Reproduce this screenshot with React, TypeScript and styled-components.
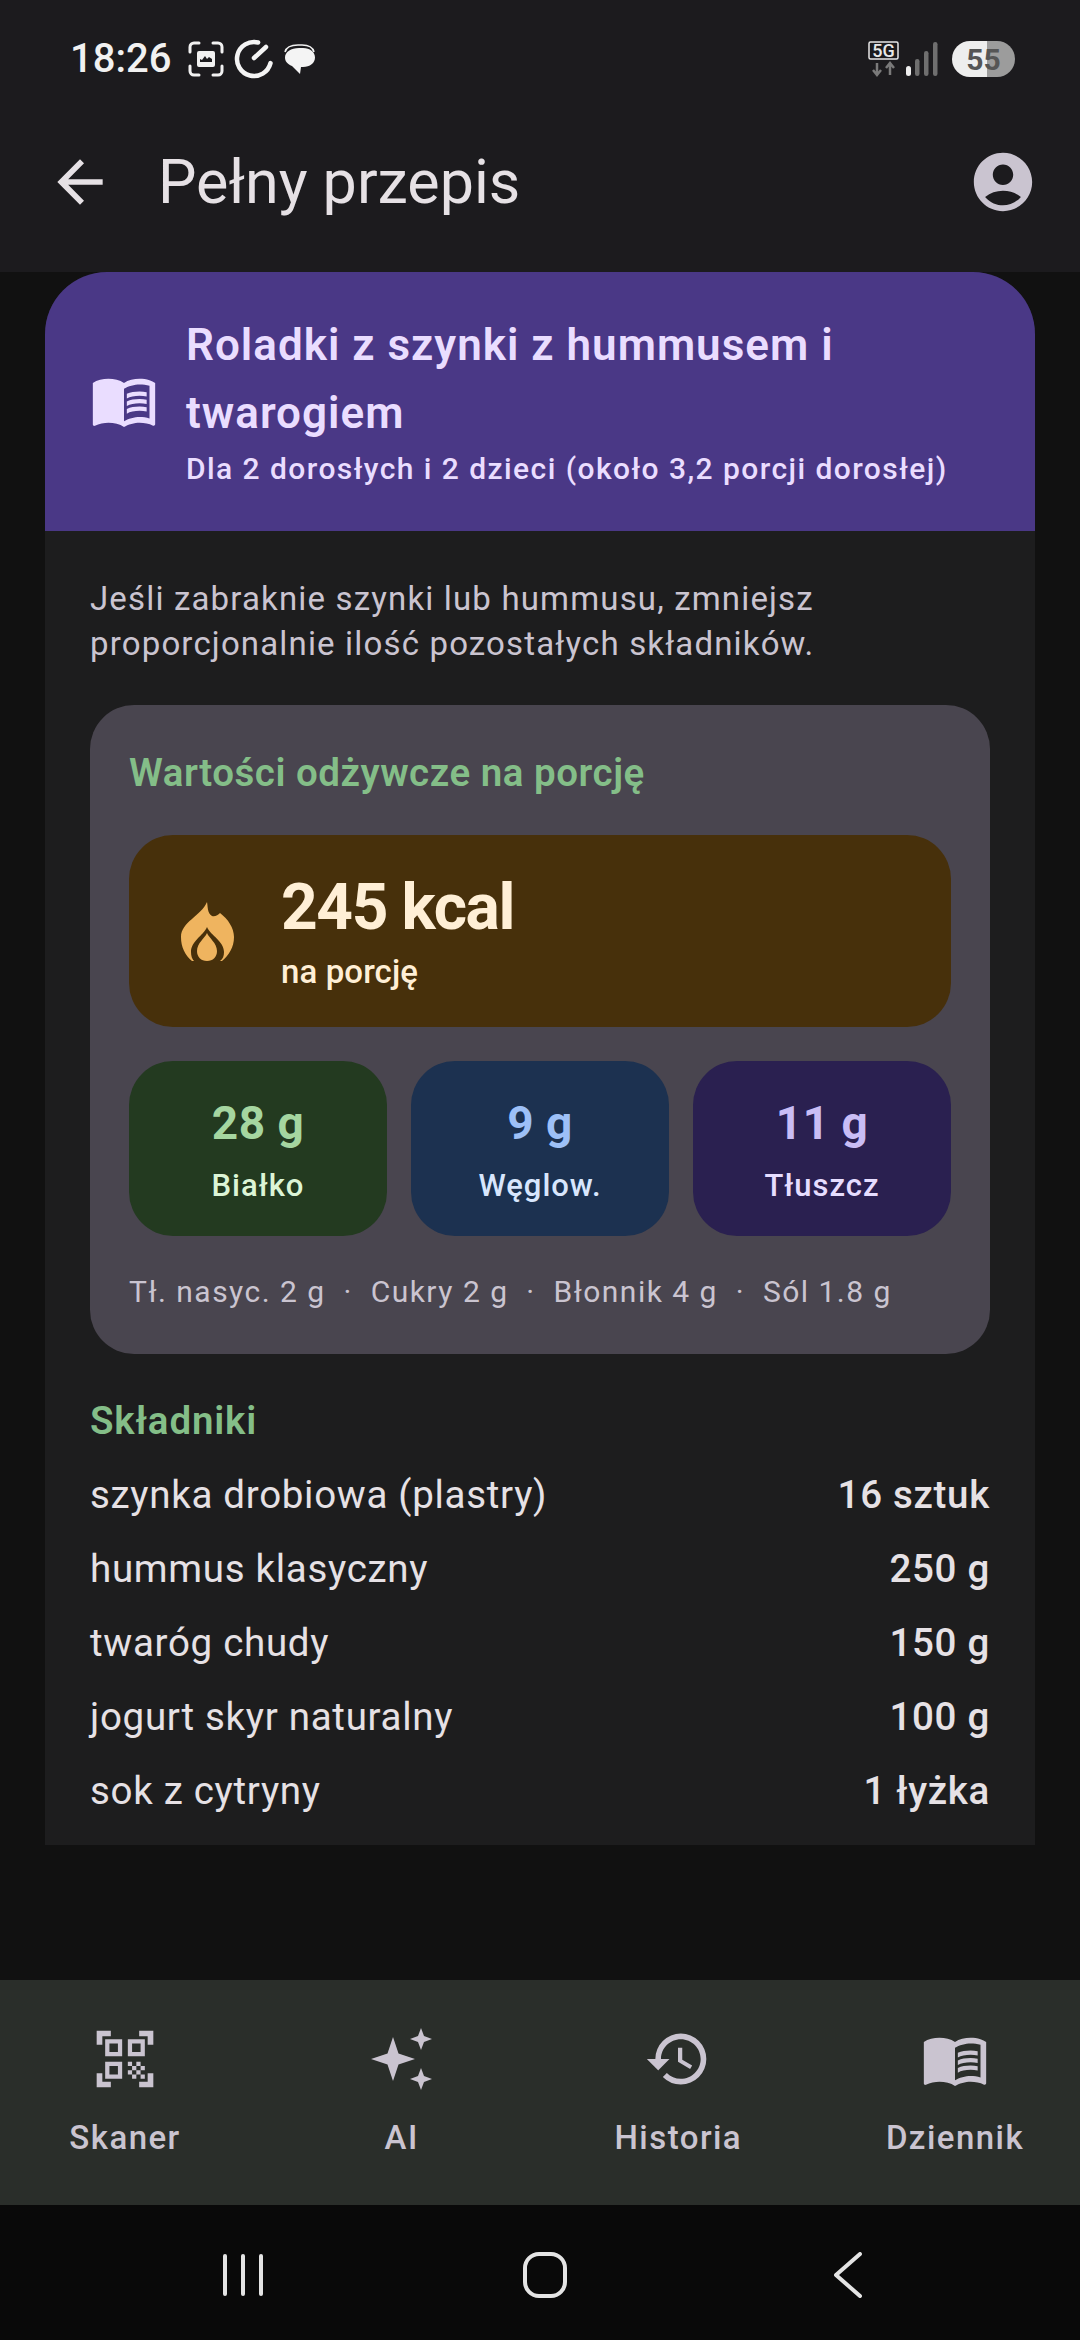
import { createGlobalStyle, styled } from "styled-components";
import { MdAccountCircle, MdArrowBack, MdHistory, MdMenuBook, MdQrCodeScanner } from "react-icons/md";

const GlobalStyle = createGlobalStyle`
  html, body {
    margin: 0;
    background: #111111;
  }
  body {
    font-family: Roboto, "Noto Sans", sans-serif;
  }
  * {
    box-sizing: border-box;
  }
`;

const Screen = styled.div`
  display: flex;
  flex-direction: column;
  width: 1080px;
  height: 2340px;
  overflow: hidden;
  background: #111111;
`;

const StatusBar = styled.div`
  display: flex;
  align-items: center;
  justify-content: space-between;
  height: 92px;
  padding: 26px 65px 0 70px;
  background: #1c1b1e;
`;

const StatusGroup = styled.div`
  display: flex;
  align-items: center;
  gap: ${(props: { $gap: number }) => props.$gap}px;
`;

const Clock = styled.span`
  margin-right: 7px;
  font-size: 40px;
  line-height: 46px;
  font-weight: 500;
  color: #f1f1f1;
`;

const Battery = styled.div`
  display: flex;
  align-items: center;
  justify-content: center;
  width: 63px;
  height: 36px;
  margin-left: 8px;
  border-radius: 18px;
  background: linear-gradient(90deg, #eeeeee 0 55%, #9c9c9c 55% 100%);
  font-size: 30px;
  font-weight: 700;
  color: #555555;
`;

const AppBar = styled.header`
  display: flex;
  align-items: center;
  height: 180px;
  padding: 0 42px 0 46px;
  background: #1c1b1e;
  color: #e6e1e5;
`;

const AppTitle = styled.h1`
  flex: 1;
  margin: 0 0 0 44px;
  font-size: 61px;
  line-height: 80px;
  font-weight: 400;
`;

const Main = styled.main`
  flex: 1;
  padding: 0 45px;
`;

const RecipeCard = styled.article`
  border-radius: 62px 62px 0 0;
  overflow: hidden;
  background: #1d1d1e;
`;

const RecipeHeader = styled.div`
  display: flex;
  align-items: center;
  gap: 28px;
  height: 259px;
  padding: 0 30px 3px 45px;
  background: #4a3886;
  color: #eaddff;
`;

const RecipeTitle = styled.h2`
  margin: 0;
  font-size: 44px;
  line-height: 68px;
  font-weight: 600;
  letter-spacing: 1px;
`;

const RecipeSubtitle = styled.p`
  margin: 2px 0 0;
  font-size: 30px;
  line-height: 40px;
  font-weight: 500;
  letter-spacing: 1.43px;
`;

const RecipeBody = styled.div`
  padding: 45px 45px 28px;
`;

const Note = styled.p`
  margin: 0;
  font-size: 33px;
  line-height: 45px;
  letter-spacing: 1.16px;
  color: #cac4d0;
`;

const NutritionCard = styled.section`
  margin-top: 39px;
  padding: 42px 39px;
  border-radius: 44px;
  background: #49454f;
`;

const SectionTitle = styled.h3`
  margin: 0;
  font-size: 38.5px;
  line-height: 52px;
  font-weight: 600;
  letter-spacing: 0.52px;
  color: #84be88;
`;

const KcalCard = styled.div`
  display: flex;
  align-items: center;
  gap: 47px;
  height: 192px;
  margin-top: 36px;
  padding: 0 52px;
  border-radius: 44px;
  background: #47300b;
`;

const KcalValue = styled.div`
  font-size: 64px;
  line-height: 78px;
  font-weight: 700;
  letter-spacing: -1.4px;
  color: #ffefd6;
`;

const KcalLabel = styled.div`
  margin-top: 3px;
  font-size: 33px;
  line-height: 44px;
  font-weight: 500;
  letter-spacing: 0.1px;
  color: #ffefd6;
`;

const MacroRow = styled.div`
  display: grid;
  grid-template-columns: repeat(3, 1fr);
  gap: 24px;
  margin-top: 34px;
`;

const MacroCard = styled.div<{ $bg: string }>`
  display: flex;
  flex-direction: column;
  align-items: center;
  justify-content: center;
  gap: 15px;
  height: 175px;
  padding-top: 3px;
  border-radius: 44px;
  background: ${(props) => props.$bg};
`;

const MacroValue = styled.div<{ $color: string }>`
  font-size: 46px;
  line-height: 56px;
  font-weight: 700;
  letter-spacing: 0.5px;
  color: ${(props) => props.$color};
`;

const MacroLabel = styled.div<{ $color: string }>`
  font-size: 31px;
  line-height: 40px;
  font-weight: 500;
  letter-spacing: 1px;
  color: ${(props) => props.$color};
`;

const Extras = styled.p`
  margin: 36px 0 0;
  font-size: 30px;
  line-height: 40px;
  font-weight: 400;
  letter-spacing: 1.48px;
  white-space: pre;
  color: #cac4d0;
`;

const IngredientsTitle = styled(SectionTitle)`
  margin-top: 41px;
  letter-spacing: 0.85px;
`;

const IngredientList = styled.ul`
  display: flex;
  flex-direction: column;
  gap: 22px;
  margin: 22px 0 0;
  padding: 0;
  list-style: none;
`;

const Ingredient = styled.li`
  display: flex;
  justify-content: space-between;
  font-size: 38.5px;
  line-height: 52px;
  letter-spacing: 0.7px;
  color: #e6e1e5;
`;

const Amount = styled.span`
  font-weight: 500;
`;

const BottomNav = styled.nav`
  display: flex;
  justify-content: space-between;
  height: 225px;
  padding: 46px 33px 0;
  background: #2a2e2a;
`;

const NavItem = styled.div`
  display: flex;
  flex-direction: column;
  align-items: center;
  gap: 24px;
  width: 184px;
  color: #cac4d0;
`;

const NavLabel = styled.span`
  font-size: 33px;
  line-height: 44px;
  font-weight: 500;
  letter-spacing: 1.45px;
`;

const NavIconBox = styled.div`
  display: flex;
  align-items: center;
  justify-content: center;
  width: 68px;
  height: 66px;
`;

const SystemBar = styled.div`
  display: flex;
  align-items: center;
  justify-content: space-between;
  height: 135px;
  padding: 5px 218px 0 223px;
  background: #090909;
`;

const HomeSlot = styled.div`
  display: flex;
  margin-right: 8px;
`;

function ScreenshotIcon() {
  return (
    <svg width="36" height="36" viewBox="0 0 36 36" fill="none">
      <path
        d="M2 11V6a4 4 0 0 1 4-4h5M25 2h5a4 4 0 0 1 4 4v5M34 25v5a4 4 0 0 1-4 4h-5M11 34H6a4 4 0 0 1-4-4v-5"
        stroke="#f1f1f1"
        strokeWidth="3"
        strokeLinecap="round"
      />
      <path
        fillRule="evenodd"
        clipRule="evenodd"
        d="M11 10h14a2 2 0 0 1 2 2v12a2 2 0 0 1-2 2H11a2 2 0 0 1-2-2V12a2 2 0 0 1 2-2Zm1 11h12v-3l-3-2-2 2-2-3-3 4-2-1Z"
        fill="#f1f1f1"
      />
    </svg>
  );
}

function TimerIcon() {
  return (
    <svg width="40" height="40" viewBox="0 0 40 40" fill="none">
      <path
        d="M20 3a17 17 0 1 0 17 17"
        stroke="#f4f4f4"
        strokeWidth="4.5"
        strokeLinecap="round"
        transform="rotate(14 20 20)"
      />
      <path d="M20 19 32 8" stroke="#f4f4f4" strokeWidth="4.5" strokeLinecap="round" />
    </svg>
  );
}

function ChatIcon() {
  return (
    <svg width="32" height="32" viewBox="0 0 32 32" fill="none">
      <path
        d="M1 9c1-4 5-7 13-7h4c7 0 11 3 12 7"
        stroke="#f1f1f1"
        strokeWidth="1.5"
        fill="none"
      />
      <path
        d="M15 5h4c7 0 12 4 12 9.500S26 24 19 24h-2l-1 7-8-8C3 21 1 18 1 14.500 1 9 7 5 15 5Z"
        fill="#f4f4f4"
      />
    </svg>
  );
}

function NetworkIcon() {
  return (
    <svg width="32" height="36" viewBox="0 0 32 36" fill="none">
      <rect x="1" y="1" width="29" height="17" rx="1.5" stroke="#e8e8e8" strokeWidth="1.500" />
      <text x="15.5" y="15.500" fontFamily="Roboto" fontSize="18" fontWeight="500" textAnchor="middle" fill="#e8e8e8">
        5G
      </text>
      <path
        d="M9 22v12M5 29l4 5 4-5M22 34V22M18 27l4-5 4 5"
        stroke="#7a7a7a"
        strokeWidth="2.500"
      />
    </svg>
  );
}

function SignalIcon() {
  return (
    <svg width="32" height="34" viewBox="0 0 32 34">
      <rect x="0" y="24" width="5" height="10" rx="2.500" fill="#eeeeee" />
      <rect x="9" y="17" width="4.500" height="17" rx="2.200" fill="#6f6f6f" />
      <rect x="18" y="9" width="4.500" height="25" rx="2.200" fill="#6f6f6f" />
      <rect x="27" y="0" width="4.500" height="34" rx="2.200" fill="#6f6f6f" />
    </svg>
  );
}

function FlameIcon() {
  return (
    <svg width="53" height="59" viewBox="0 0 53 59">
      <path
        d="M26 0C27 5 26 11 31 14C34 15 37 13 39 11C47 17 53 26 53 35C53 45 48 53 41 59H11C4 53 0 45 0 35C0 20 20 14 26 0Z"
        fill="#efb45f"
      />
      <path d="M26 25C22 34 10 39 10 50C10 54 11 57 13 59H39C42 57 43 54 43 50C43 39 30 34 26 25Z" fill="#47300b" />
      <path d="M26 31C28 36 36 41 36 49C36 55 32 59 26 59C20 59 16 55 16 49C16 41 24 36 26 31Z" fill="#efb45f" />
    </svg>
  );
}

function SparklesIcon() {
  return (
    <svg width="66" height="66" viewBox="0 0 66 66" fill="currentColor">
      <path d="M24 11 29.500 27.500 46 33 29.500 38.500 24 55 18.500 38.500 2 33 18.500 27.500Z" />
      <path d="M52 2 55 10 63 13 55 16 52 24 49 16 41 13 49 10Z" />
      <path d="M52 42 55 50 63 53 55 56 52 64 49 56 41 53 49 50Z" />
    </svg>
  );
}

function RecentsIcon() {
  return (
    <svg width="40" height="42" viewBox="0 0 40 42" fill="#e4e4e4">
      <rect x="0" y="0" width="4" height="42" rx="2" />
      <rect x="18" y="0" width="4" height="42" rx="2" />
      <rect x="36" y="0" width="4" height="42" rx="2" />
    </svg>
  );
}

function HomeIcon() {
  return (
    <svg width="44" height="46" viewBox="0 0 44 46" fill="none">
      <rect x="2" y="2" width="40" height="42" rx="14" stroke="#e4e4e4" strokeWidth="4" />
    </svg>
  );
}

function BackIcon() {
  return (
    <svg width="28" height="46" viewBox="0 0 28 46" fill="none">
      <path d="M26 2 2 23 26 44" stroke="#e4e4e4" strokeWidth="4" strokeLinecap="round" strokeLinejoin="round" />
    </svg>
  );
}

const macros = [
  { value: "28 g", label: "Białko", bg: "#233a20", valueColor: "#a5d6a0", labelColor: "#dcf5d6" },
  { value: "9 g", label: "Węglow.", bg: "#1c3150", valueColor: "#9dc0f7", labelColor: "#d8e6fd" },
  { value: "11 g", label: "Tłuszcz", bg: "#2a2050", valueColor: "#c9bdf5", labelColor: "#e6ddff" },
];

const ingredients = [
  { name: "szynka drobiowa (plastry)", amount: "16 sztuk" },
  { name: "hummus klasyczny", amount: "250 g" },
  { name: "twaróg chudy", amount: "150 g" },
  { name: "jogurt skyr naturalny", amount: "100 g" },
  { name: "sok z cytryny", amount: "1 łyżka" },
];

export default function App() {
  return (
    <Screen>
      <GlobalStyle />
      <StatusBar>
        <StatusGroup $gap={10}>
          <Clock>18:26</Clock>
          <ScreenshotIcon />
          <TimerIcon />
          <ChatIcon />
        </StatusGroup>
        <StatusGroup $gap={6}>
          <NetworkIcon />
          <SignalIcon />
          <Battery>55</Battery>
        </StatusGroup>
      </StatusBar>

      <AppBar>
        <MdArrowBack size={68} />
        <AppTitle>Pełny przepis</AppTitle>
        <MdAccountCircle size={70} color="#cac4d0" />
      </AppBar>

      <Main>
        <RecipeCard>
          <RecipeHeader>
            <MdMenuBook size={68} style={{ flexShrink: 0 }} />
            <div>
              <RecipeTitle>Roladki z szynki z hummusem i twarogiem</RecipeTitle>
              <RecipeSubtitle>Dla 2 dorosłych i 2 dzieci (około 3,2 porcji dorosłej)</RecipeSubtitle>
            </div>
          </RecipeHeader>

          <RecipeBody>
            <Note>
              Jeśli zabraknie szynki lub hummusu, zmniejsz proporcjonalnie ilość pozostałych składników.
            </Note>

            <NutritionCard>
              <SectionTitle>Wartości odżywcze na porcję</SectionTitle>
              <KcalCard>
                <FlameIcon />
                <div>
                  <KcalValue>245 kcal</KcalValue>
                  <KcalLabel>na porcję</KcalLabel>
                </div>
              </KcalCard>
              <MacroRow>
                {macros.map((macro) => (
                  <MacroCard key={macro.label} $bg={macro.bg}>
                    <MacroValue $color={macro.valueColor}>{macro.value}</MacroValue>
                    <MacroLabel $color={macro.labelColor}>{macro.label}</MacroLabel>
                  </MacroCard>
                ))}
              </MacroRow>
              <Extras>Tł. nasyc. 2 g  ·  Cukry 2 g  ·  Błonnik 4 g  ·  Sól 1.8 g</Extras>
            </NutritionCard>

            <IngredientsTitle>Składniki</IngredientsTitle>
            <IngredientList>
              {ingredients.map((item) => (
                <Ingredient key={item.name}>
                  <span>{item.name}</span>
                  <Amount>{item.amount}</Amount>
                </Ingredient>
              ))}
            </IngredientList>
          </RecipeBody>
        </RecipeCard>
      </Main>

      <BottomNav>
        <NavItem>
          <NavIconBox>
            <MdQrCodeScanner size={68} />
          </NavIconBox>
          <NavLabel>Skaner</NavLabel>
        </NavItem>
        <NavItem>
          <NavIconBox>
            <SparklesIcon />
          </NavIconBox>
          <NavLabel>AI</NavLabel>
        </NavItem>
        <NavItem>
          <NavIconBox>
            <MdHistory size={68} />
          </NavIconBox>
          <NavLabel>Historia</NavLabel>
        </NavItem>
        <NavItem>
          <NavIconBox>
            <MdMenuBook size={68} />
          </NavIconBox>
          <NavLabel>Dziennik</NavLabel>
        </NavItem>
      </BottomNav>

      <SystemBar>
        <RecentsIcon />
        <HomeSlot>
          <HomeIcon />
        </HomeSlot>
        <BackIcon />
      </SystemBar>
    </Screen>
  );
}
